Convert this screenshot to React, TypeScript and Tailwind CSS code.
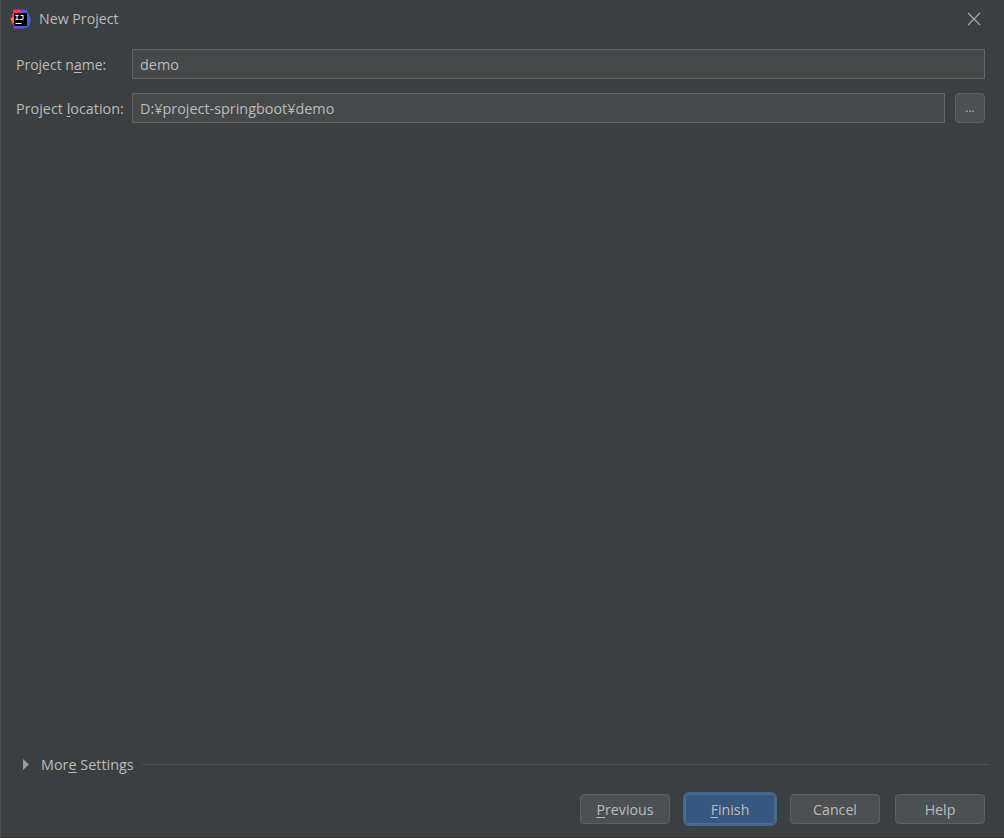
const font = "font-['Open_Sans','Liberation_Sans',sans-serif]";

function Logo() {
  return (
    <svg width="21" height="20" viewBox="0 0 21 20" className="shrink-0">
      <path d="M3 2 Q3 0.5 5 0.5 L11 0.5 L14 4 L6 19 L1 13 Z" fill="#f5316f" />
      <path d="M0 9 L4 8 L6 14 L3 14 Z" fill="#f97a12" />
      <path d="M12 0.5 Q15 0 17 1.5 L20.5 9 Q21 12 20 15 L18 18 L13 19.5 L5 19.5 L3 15 L10 8 Z" fill="#3d63e0" />
      <path d="M2 13 L8 19.5 L4 19.5 Z" fill="#b52ccf" />
      <rect x="4" y="4" width="13" height="13" fill="#000000" />
      <rect x="5.5" y="14" width="6" height="1" fill="#ffffff" />
      <rect x="6.5" y="6" width="1" height="5" fill="#ffffff" />
      <rect x="5.5" y="6" width="3" height="1" fill="#ffffff" />
      <rect x="5.5" y="10" width="3" height="1" fill="#ffffff" />
      <path d="M10.5 6 H13.5 V10 Q13.5 11 12 11 H9.5 V10 H12 Q12.5 10 12.5 9.5 V7 H10.5 Z" fill="#ffffff" />
    </svg>
  );
}

function Field({ label, mnemonic, rest, value, labelClass }: { label: string; mnemonic: string; rest: string; value: string; labelClass: string }) {
  return (
    <div className="flex items-center h-[30px]">
      <label className={`w-[116px] shrink-0 text-[#bbbbbb] whitespace-nowrap ${labelClass}`}>
        {label}
        <span className="underline underline-offset-2">{mnemonic}</span>
        {rest}
      </label>
      <div className="flex-1 h-[30px] flex items-center px-[7px] pt-[2px] bg-[#45494a] border border-[#646464] text-[14.4px] text-[#bbbbbb]">
        {value}
      </div>
    </div>
  );
}

function Btn({ pre, mn, post, primary }: { pre?: string; mn?: string; post?: string; primary?: boolean }) {
  return (
    <button
      className={
        primary
          ? "w-[90px] h-[30px] pt-[2px] rounded-[4px] text-[14.2px] text-[#bbbbbb] bg-[#365880] border border-[#4c708c] outline-2 outline-[#3f6a96]"
          : "w-[90px] h-[30px] pt-[2px] rounded-[4px] text-[14.2px] text-[#bbbbbb] bg-[#4c5052] border border-[#5e6060]"
      }
    >
      {pre}
      {mn && <span className="underline underline-offset-2">{mn}</span>}
      {post}
    </button>
  );
}

export default function App() {
  return (
    <div className={`${font} w-[1004px] h-[838px] flex flex-col bg-[#3c3f41] border-l border-[#4a4d4f] border-b-[#323232] border-b`}>
      <div className="h-[37px] flex items-center pl-[9px] pr-[23px] gap-[8px]">
        <Logo />
        <span className="text-[14.2px] text-[#bbbbbb] flex-1">New Project</span>
        <svg width="14" height="14" viewBox="0 0 14 14" stroke="#a8a8a8" strokeWidth="1.2">
          <path d="M1 1 L13 13 M13 1 L1 13" />
        </svg>
      </div>

      <div className="flex flex-col gap-[14px] pl-[15px] pr-[19px] pt-[12px]">
        <Field label="Project n" mnemonic="a" rest="me:" value="demo" labelClass="text-[14px]" />
        <div className="flex items-center gap-[10px]">
          <div className="flex-1">
            <Field label="Project " mnemonic="l" rest="ocation:" value="D:¥project-springboot¥demo" labelClass="pt-[2px] text-[14.4px]" />
          </div>
          <button className="w-[30px] h-[30px] rounded-[4px] bg-[#4c5052] border border-[#5e6060] text-[12px] text-[#bbbbbb]">
            ...
          </button>
        </div>
      </div>

      <div className="flex-1" />

      <div className="flex items-center pl-[22px] pr-[15px] h-[20px] mb-[20px]">
        <svg width="6" height="11" viewBox="0 0 6 11" className="shrink-0">
          <path d="M0 0 L6 5.5 L0 11 Z" fill="#9a9c9e" />
        </svg>
        <span className="ml-[12px] pt-[2px] text-[14.4px] text-[#bbbbbb] whitespace-nowrap">
          Mor<span className="underline underline-offset-2">e</span> Settings
        </span>
        <div className="flex-1 h-px bg-[#515151] ml-[8px]" />
      </div>

      <div className="flex justify-end gap-[15px] pr-[19px] pb-[13px]">
        <Btn mn="P" post="revious" />
        <Btn mn="F" post="inish" primary />
        <Btn pre="Cancel" />
        <Btn pre="Help" />
      </div>
    </div>
  );
}
